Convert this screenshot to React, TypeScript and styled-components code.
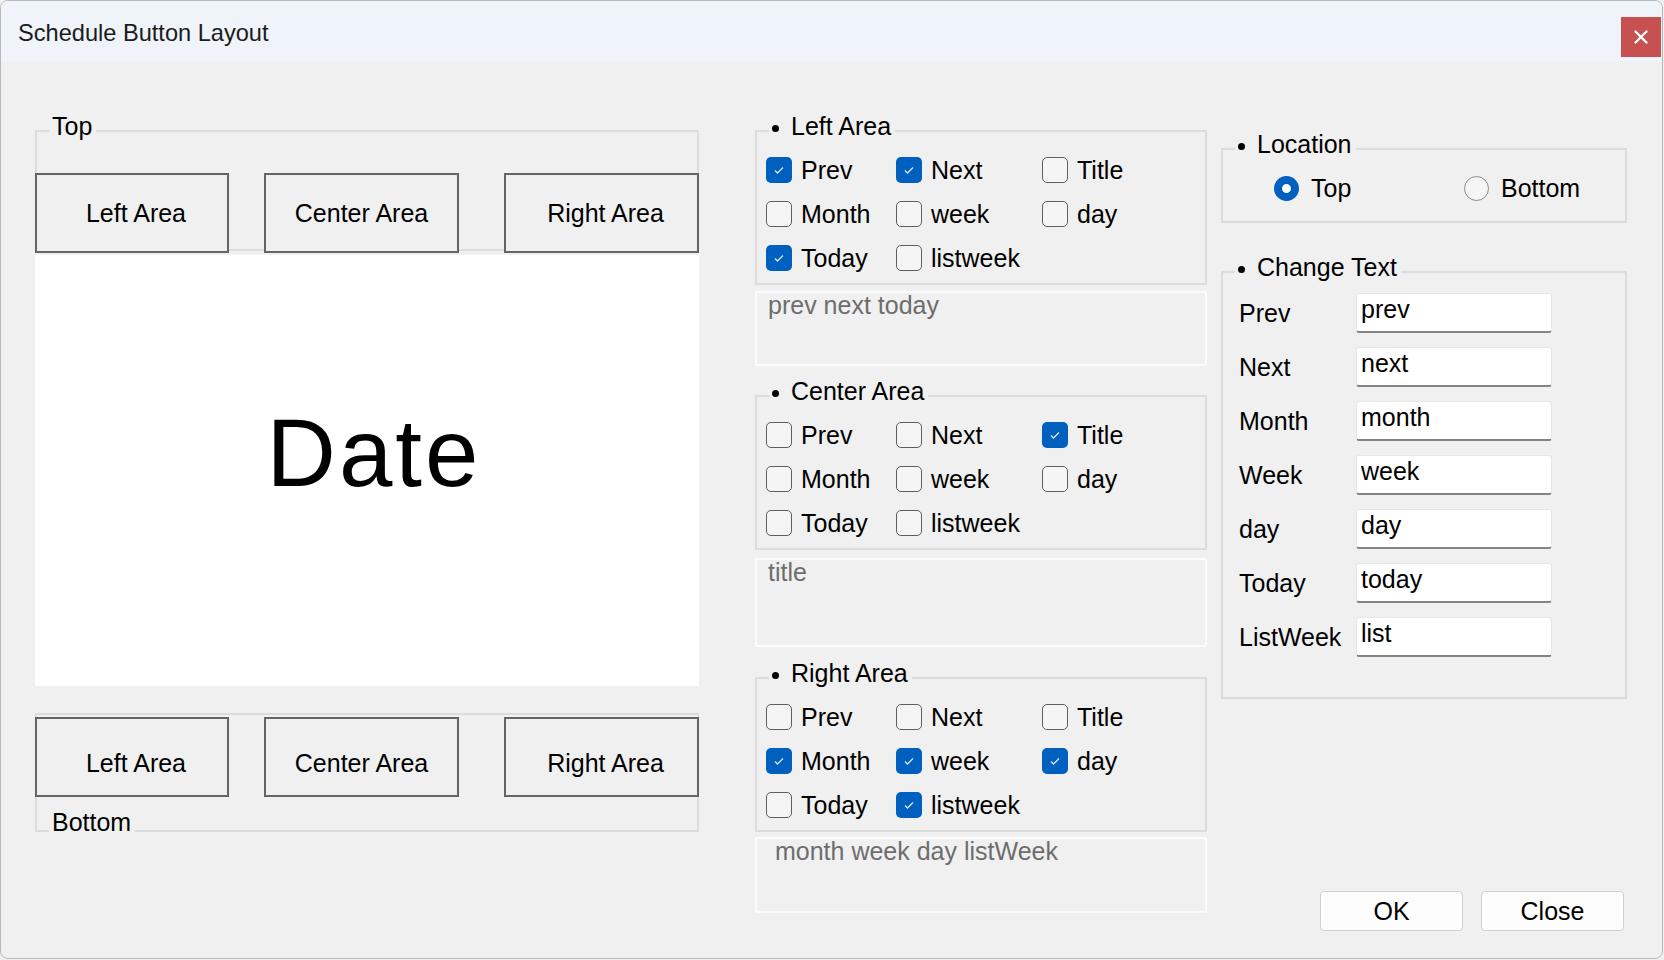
import React from "react";
import styled, { createGlobalStyle } from "styled-components";
import { X } from "lucide-react";

const FONT = `"Liberation Sans", Arial, sans-serif`;

const GlobalStyle = createGlobalStyle`
  html, body {
    margin: 0;
    padding: 0;
    background: #f0f0f0;
  }
  body {
    font-family: ${FONT};
  }
`;

const Window = styled.div`
  width: 1663px;
  height: 959px;
  box-sizing: border-box;
  border: 1px solid #b9b9b9;
  border-radius: 8px;
  overflow: hidden;
  background: #f0f0f0;
  display: flex;
  flex-direction: column;
  font-family: ${FONT};
  color: #000;
`;

const TitleBar = styled.div`
  height: 61px;
  flex: none;
  display: flex;
  align-items: center;
  background: #eef4f9;
  padding-left: 17px;
`;

const TitleText = styled.div`
  flex: 1;
  font-size: 23.6px;
  color: #1b1b1b;
  margin-top: 3px;
`;

const CloseButton = styled.button`
  width: 40px;
  height: 40px;
  margin: 11px 1px 0 0;
  padding: 0;
  border: 0;
  background: #c75050;
  color: #fff;
  display: flex;
  align-items: center;
  justify-content: center;
`;

const Body = styled.div`
  flex: 1;
  display: flex;
  padding-left: 34px;
`;

const Column = styled.div<{ $width: number; $top: number; $gap?: number }>`
  width: ${(p) => p.$width}px;
  margin-right: ${(p) => p.$gap ?? 0}px;
  padding-top: ${(p) => p.$top}px;
  display: flex;
  flex-direction: column;
  flex: none;
`;

const Group = styled.fieldset<{ $mt?: number; $pb?: number }>`
  margin: ${(p) => p.$mt ?? 0}px 0 0;
  padding: 0 0 ${(p) => p.$pb ?? 3}px;
  border: 2px solid #dcdcdc;
  min-width: 0;
`;

const Legend = styled.legend`
  margin-left: 12px;
  padding: 0 4px 9px 3px;
  font-size: 25px;
  line-height: 26px;
  white-space: nowrap;
`;

const Bullet = styled.span`
  display: inline-block;
  width: 7px;
  height: 7px;
  border-radius: 50%;
  background: #000;
  margin-right: 12px;
  vertical-align: middle;
`;

/* left column */

const AreaRow = styled.div<{ $top?: number; $bottom?: number }>`
  display: flex;
  margin: ${(p) => p.$top ?? 0}px -2px ${(p) => p.$bottom ?? 0}px;
`;

const AreaButton = styled.button<{ $w: number; $mr?: number; $shift?: number; $low?: boolean }>`
  width: ${(p) => p.$w}px;
  height: 80px;
  margin-right: ${(p) => p.$mr ?? 0}px;
  flex: none;
  box-sizing: border-box;
  border: 2px solid #646464;
  background: #f0f0f0;
  font: 25px ${FONT};
  color: #000;
  padding: ${(p) => (p.$low ? 12 : 0)}px 0 0 ${(p) => p.$shift ?? 0}px;
`;

const DatePanel = styled.div`
  height: 431px;
  margin-top: 4px;
  box-sizing: border-box;
  background: #fff;
  display: flex;
  align-items: center;
  justify-content: center;
  padding: 0 0 35px 14px;
`;

const DateText = styled.span`
  font-size: 96px;
  letter-spacing: 3px;
  color: #000;
`;

const BottomFrame = styled.div`
  position: relative;
  margin-top: 27px;
  border: 2px solid #dcdcdc;
  padding: 2px 0 33px;
`;

const BottomCaption = styled.span`
  position: absolute;
  left: 12px;
  bottom: -5px;
  padding: 0 4px 0 3px;
  background: #f0f0f0;
  font-size: 25px;
  line-height: 26px;
`;

/* middle column */

const CheckGrid = styled.div`
  display: grid;
  grid-template-columns: 130px 146px 1fr;
  grid-auto-rows: 44px;
  padding-left: 9px;
`;

const CheckItem = styled.label`
  display: flex;
  align-items: center;
  gap: 9px;
  font-size: 25px;
`;

const Box = styled.span<{ $checked: boolean }>`
  width: 26px;
  height: 26px;
  flex: none;
  box-sizing: border-box;
  border-radius: 5px;
  display: flex;
  align-items: center;
  justify-content: center;
  background: ${(p) => (p.$checked ? "#0060c0" : "#f5f5f5")};
  border: ${(p) => (p.$checked ? "none" : "1.5px solid #5f5f5f")};
`;

const NoteBox = styled.textarea<{ $h: number; $mt: number }>`
  display: block;
  box-sizing: border-box;
  width: 100%;
  height: ${(p) => p.$h}px;
  margin: ${(p) => p.$mt}px 0 0;
  padding: 0 8px 0 11px;
  border: 2px solid #fbfbfb;
  background: #f0f0f0;
  color: #6d6d6d;
  font: 25px/24px ${FONT};
  resize: none;
  overflow: hidden;
  outline: none;
`;

/* right column */

const RadioRow = styled.div`
  display: flex;
  align-items: center;
  height: 44px;
  padding-left: 51px;
`;

const RadioItem = styled.label<{ $w?: number }>`
  display: flex;
  align-items: center;
  gap: 12px;
  width: ${(p) => (p.$w ? `${p.$w}px` : "auto")};
  font-size: 25px;
`;

const RadioDot = styled.span<{ $checked: boolean }>`
  width: 25px;
  height: 25px;
  flex: none;
  box-sizing: border-box;
  border-radius: 50%;
  background: ${(p) => (p.$checked ? "#fff" : "#f5f5f5")};
  border: ${(p) => (p.$checked ? "8px solid #0060c0" : "1px solid #8a8a8a")};
`;

const FieldGrid = styled.div`
  display: grid;
  grid-template-columns: 117px 196px;
  grid-auto-rows: 40px;
  row-gap: 14px;
  align-items: center;
  padding: 4px 0 0 16px;
`;

const FieldLabel = styled.span`
  font-size: 25px;
`;

const TextField = styled.input`
  box-sizing: border-box;
  width: 196px;
  height: 40px;
  border: 1px solid #e6e6e6;
  border-bottom: 2px solid #848484;
  border-radius: 3px;
  background: #fff;
  padding: 0 4px 6px;
  font: 25px ${FONT};
  color: #000;
  outline: none;
`;

const Footer = styled.div`
  margin-top: auto;
  display: flex;
  justify-content: flex-end;
  gap: 18px;
  padding: 0 3px 27px 0;
`;

const DialogButton = styled.button`
  width: 143px;
  height: 40px;
  box-sizing: border-box;
  border: 1px solid #d0d0d0;
  border-radius: 4px;
  background: #fdfdfd;
  font: 25px ${FONT};
  color: #000;
  padding: 0;
`;

const CHECK_NAMES = ["Prev", "Next", "Title", "Month", "week", "day", "Today", "listweek"];

const areas = [
  {
    name: "Left Area",
    checked: [true, true, false, false, false, false, true, false],
    note: "prev next today",
    groupTop: 0,
    noteTop: 6,
    noteH: 75,
  },
  {
    name: "Center Area",
    checked: [false, false, true, false, false, false, false, false],
    note: "title",
    groupTop: 12,
    noteTop: 8,
    noteH: 89,
  },
  {
    name: "Right Area",
    checked: [false, false, false, true, true, true, false, true],
    note: " month week day listWeek",
    groupTop: 13,
    noteTop: 5,
    noteH: 76,
  },
];

const fields = [
  ["Prev", "prev"],
  ["Next", "next"],
  ["Month", "month"],
  ["Week", "week"],
  ["day", "day"],
  ["Today", "today"],
  ["ListWeek", "list"],
];

function CheckMark() {
  return (
    <svg width="26" height="26" viewBox="0 0 26 26">
      <polyline points="9,13.5 11.5,16 17,10.5" fill="none" stroke="#d4e4f6" strokeWidth="1.4" />
    </svg>
  );
}

function AreaButtons({ top, bottom, low }: { top?: number; bottom?: number; low?: boolean }) {
  return (
    <AreaRow $top={top} $bottom={bottom}>
      <AreaButton $w={194} $mr={35} $shift={8} $low={low}>
        Left Area
      </AreaButton>
      <AreaButton $w={195} $mr={45} $low={low}>
        Center Area
      </AreaButton>
      <AreaButton $w={195} $shift={8} $low={low}>
        Right Area
      </AreaButton>
    </AreaRow>
  );
}

export default function App() {
  return (
    <>
      <GlobalStyle />
      <Window>
        <TitleBar>
          <TitleText>Schedule Button Layout</TitleText>
          <CloseButton>
            <X size={22} strokeWidth={2.6} />
          </CloseButton>
        </TitleBar>
        <Body>
          <Column $width={664} $top={51} $gap={56}>
            <Group $pb={0}>
              <Legend>Top</Legend>
              <AreaButtons top={25} bottom={-4} />
            </Group>
            <DatePanel>
              <DateText>Date</DateText>
            </DatePanel>
            <BottomFrame>
              <AreaButtons low />
              <BottomCaption>Bottom</BottomCaption>
            </BottomFrame>
          </Column>

          <Column $width={452} $top={51} $gap={14}>
            {areas.map((area) => (
              <React.Fragment key={area.name}>
                <Group $mt={area.groupTop}>
                  <Legend>
                    <Bullet />
                    {area.name}
                  </Legend>
                  <CheckGrid>
                    {CHECK_NAMES.map((label, i) => (
                      <CheckItem key={label}>
                        <Box $checked={area.checked[i]}>{area.checked[i] && <CheckMark />}</Box>
                        {label}
                      </CheckItem>
                    ))}
                  </CheckGrid>
                </Group>
                <NoteBox $h={area.noteH} $mt={area.noteTop} value={area.note} readOnly />
              </React.Fragment>
            ))}
          </Column>

          <Column $width={406} $top={69}>
            <Group $pb={11}>
              <Legend>
                <Bullet />
                Location
              </Legend>
              <RadioRow>
                <RadioItem $w={190}>
                  <RadioDot $checked={true} />
                  Top
                </RadioItem>
                <RadioItem>
                  <RadioDot $checked={false} />
                  Bottom
                </RadioItem>
              </RadioRow>
            </Group>
            <Group $mt={31} $pb={40}>
              <Legend>
                <Bullet />
                Change Text
              </Legend>
              <FieldGrid>
                {fields.map(([label, value]) => (
                  <React.Fragment key={label}>
                    <FieldLabel>{label}</FieldLabel>
                    <TextField defaultValue={value} />
                  </React.Fragment>
                ))}
              </FieldGrid>
            </Group>
            <Footer>
              <DialogButton>OK</DialogButton>
              <DialogButton>Close</DialogButton>
            </Footer>
          </Column>
        </Body>
      </Window>
    </>
  );
}
